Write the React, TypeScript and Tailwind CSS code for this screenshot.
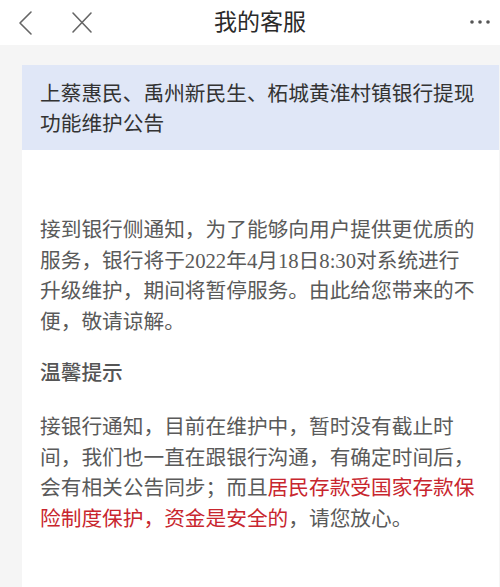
const FONT = '"Liberation Serif", "Noto Sans CJK SC", serif';

const BackIcon = () => (
  <svg width="16" height="26" viewBox="0 0 16 26" fill="none">
    <path d="M14 2 L3 13 L14 24" stroke="#666" strokeWidth="1.6" strokeLinecap="round" strokeLinejoin="round" />
  </svg>
);

const CloseIcon = () => (
  <svg width="22" height="23" viewBox="0 0 22 23" fill="none">
    <path d="M2 2 L20 21 M20 2 L2 21" stroke="#666" strokeWidth="1.6" strokeLinecap="round" />
  </svg>
);

const MoreIcon = () => (
  <svg width="22" height="6" viewBox="0 0 22 6">
    <circle cx="3" cy="3" r="1.8" fill="#555" />
    <circle cx="11" cy="3" r="1.8" fill="#555" />
    <circle cx="19" cy="3" r="1.8" fill="#555" />
  </svg>
);

export default function App() {
  return (
    <div className="w-[500px] h-[587px] overflow-hidden bg-[#f5f5f5]" style={{ fontFamily: FONT }}>
      {/* Nav bar */}
      <div className="h-[45px] bg-white flex items-center">
        <div className="w-[100px] flex items-center pl-[17px]">
          <BackIcon />
          <div className="ml-[38px]">
            <CloseIcon />
          </div>
        </div>
        <div className="flex-1 text-center text-[23px] text-[#2a2a2a] leading-[30px] pt-[1px]">我的客服</div>
        <div className="w-[80px] flex justify-end pr-[9px] pb-[1px]">
          <MoreIcon />
        </div>
      </div>

      <div className="pt-[20px]">
        <div className="ml-[22px] w-[477px] bg-white">
          <div className="bg-[#e0e7f7] pl-[18px] pr-[22px] pt-[14px] pb-[11px] text-[20.7px] leading-[30px] text-[#333]">
            上蔡惠民、禹州新民生、柘城黄淮村镇银行提现功能维护公告
          </div>

          <div className="pl-[18px] pr-[22px] pt-[65px] pb-[60px] text-[20.7px] text-[#5a5a5a]">
            <p className="leading-[30.5px]">
              接到银行侧通知，为了能够向用户提供更优质的服务，银行将于2022年4月18日8:30对系统进行升级维护，期间将暂停服务。由此给您带来的不便，敬请谅解。
            </p>
            <h3 className="mt-[21px] leading-[30px] font-medium text-[#555]">温馨提示</h3>
            <p className="mt-[24px] leading-[30.5px]">
              接银行通知，目前在维护中，暂时没有截止时间，我们也一直在跟银行沟通，有确定时间后，会有相关公告同步；而且
              <span className="text-[#c8262e]">居民存款受国家存款保险制度保护，资金是安全的</span>
              ，请您放心。
            </p>
          </div>
        </div>
      </div>
    </div>
  );
}
